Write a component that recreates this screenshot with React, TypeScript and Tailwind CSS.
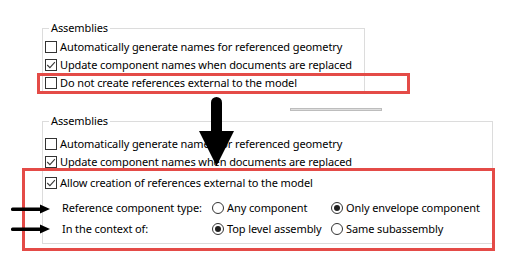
import type { ReactNode } from 'react'

const FONT = "font-['Noto_Sans','Open_Sans',sans-serif]"

function Checkbox({ checked }: { checked?: boolean }) {
  return (
    <span className="flex h-[12px] w-[12px] shrink-0 items-center justify-center border border-[#333] bg-white">
      {checked && (
        <svg width="10" height="10" viewBox="0 0 10 10">
          <path d="M1.2 5 L3.9 7.7 L8.9 2.2" fill="none" stroke="#3a3a3a" strokeWidth="1.1" />
        </svg>
      )}
    </span>
  )
}

function Radio({ checked }: { checked?: boolean }) {
  return (
    <span className="flex h-[12px] w-[12px] shrink-0 items-center justify-center rounded-full border border-[#333] bg-white">
      {checked && <span className="h-[6px] w-[6px] rounded-full bg-[#1f1f1f]" />}
    </span>
  )
}

function CheckRow({ checked, children }: { checked?: boolean; children: ReactNode }) {
  return (
    <div className="flex h-[18px] items-center gap-[3px] pl-[2px]">
      <Checkbox checked={checked} />
      <span className="whitespace-nowrap">{children}</span>
    </div>
  )
}

function RadioOption({ checked, children }: { checked?: boolean; children: ReactNode }) {
  return (
    <div className="flex items-center gap-[3px]">
      <Radio checked={checked} />
      <span className="whitespace-nowrap">{children}</span>
    </div>
  )
}

function SmallArrow({ top }: { top: number }) {
  return (
    <svg
      className="absolute left-[11px]"
      style={{ top }}
      width="40"
      height="10"
      viewBox="0 0 40 10"
    >
      <rect x="0" y="3.5" width="31" height="3.5" rx="1.5" fill="#000" />
      <path d="M29 0.5 L39 5 L29 9.5 Z" fill="#000" />
    </svg>
  )
}

export default function App() {
  return (
    <div className={`relative h-[276px] w-[525px] overflow-hidden bg-white text-[11px] leading-[16px] tracking-[-0.1px] text-black ${FONT}`}>
      <fieldset className="ml-[42px] mt-[20px] w-[323px] border border-[#dcdcdc] pb-0 pt-[2px]">
        <legend className="ml-[6px] px-[2px] leading-[16px]">Assemblies</legend>
        <CheckRow>Automatically generate names for referenced geometry</CheckRow>
        <CheckRow checked>Update component names when documents are replaced</CheckRow>
        <CheckRow>Do not create references external to the model</CheckRow>
      </fieldset>

      <div className="ml-[290px] mt-[15px] h-[3px] w-[92px] border border-[#bdbdbd] bg-[#dedede]" />

      <fieldset className="ml-[42px] mt-[2px] w-[451px] border border-[#dcdcdc] pb-[4px] pt-[6px]">
        <legend className="ml-[6px] px-[2px] leading-[16px]">Assemblies</legend>
        <CheckRow>Automatically generate names for referenced geometry</CheckRow>
        <CheckRow checked>Update component names when documents are replaced</CheckRow>
        <div className="mt-[3px]">
          <CheckRow checked>Allow creation of references external to the model</CheckRow>
        </div>
        <div className="mt-[6px] grid grid-cols-[150px_119px_1fr] grid-rows-[20px_20px] items-center gap-y-[1px] pl-[19px]">
          <span className="whitespace-nowrap">Reference component type:</span>
          <RadioOption>Any component</RadioOption>
          <RadioOption checked>Only envelope component</RadioOption>
          <span className="whitespace-nowrap">In the context of:</span>
          <RadioOption checked>Top level assembly</RadioOption>
          <RadioOption>Same subassembly</RadioOption>
        </div>
      </fieldset>

      {/* annotation highlights */}
      <div className="absolute left-[37px] top-[73px] h-[21px] w-[373px] border-[3px] border-[#e44b47]" />
      <div className="absolute left-[22px] top-[168px] h-[83px] w-[473px] border-[3px] border-[#e44b47]" />

      <svg className="absolute left-[198px] top-[95px]" width="38" height="73" viewBox="0 0 38 73">
        <rect x="13" y="2" width="11" height="40" rx="5.5" fill="#000" />
        <path d="M1 36 L36 36 L18.5 71 Z" fill="#000" />
      </svg>

      <SmallArrow top={204} />
      <SmallArrow top={224} />
    </div>
  )
}
